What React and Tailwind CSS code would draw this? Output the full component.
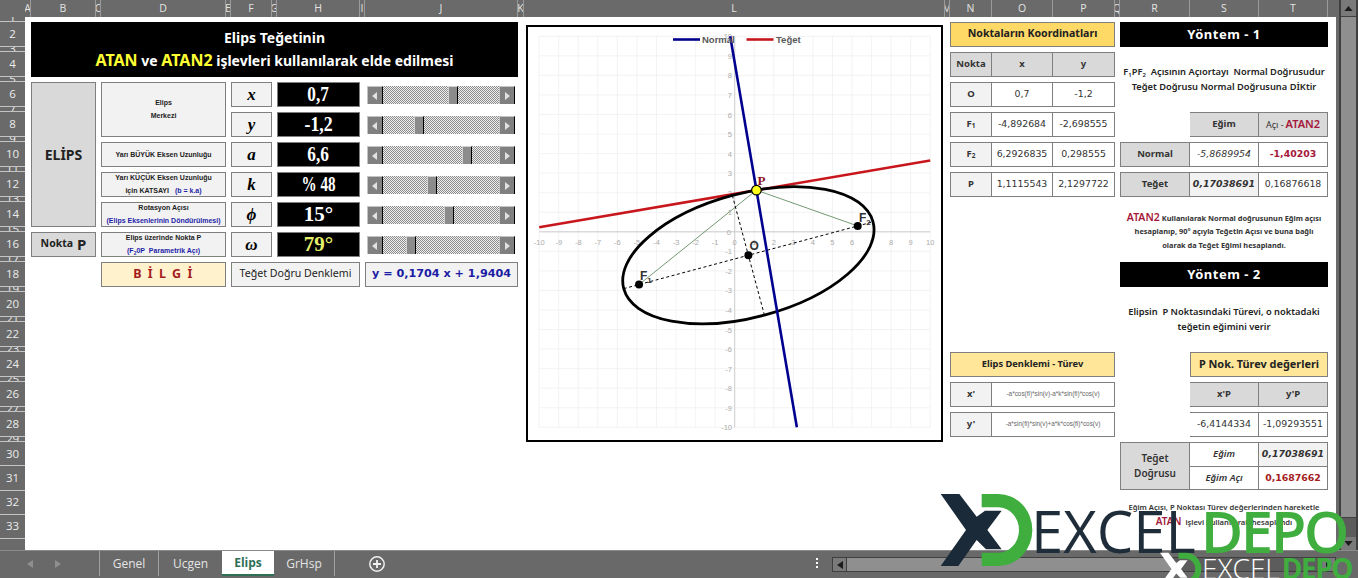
import React from 'react';

// Excel sheet "Elips" with the tangent chart, sliders and result tables

const columns = [
  ['A', 'w-[6px]'], ['B', 'w-[65px]'], ['C', 'w-[5px]'], ['D', 'w-[125px]'], ['E', 'w-[5px]'],
  ['F', 'w-[41px]'], ['G', 'w-[5px]'], ['H', 'w-[83px]'], ['I', 'w-[5px]'], ['J', 'w-[153px]'],
  ['K', 'w-[6px]'], ['L', 'w-[421px]'], ['M', 'w-[5px]'], ['N', 'w-[42px]'], ['O', 'w-[61px]'],
  ['P', 'w-[62px]'], ['Q', 'w-[5px]'], ['R', 'w-[70px]'], ['S', 'w-[69px]'], ['T', 'w-[69px]'],
];

const gutterRows = [
  [1, 'h-[5px]'], [2, 'h-[24.5px]'], [3, 'h-[5.5px]'], [4, 'h-[24.5px]'], [5, 'h-[5.5px]'], [6, 'h-[24.5px]'],
  [7, 'h-[5.5px]'], [8, 'h-[24.5px]'], [9, 'h-[5.5px]'], [10, 'h-[24.5px]'], [11, 'h-[5.5px]'], [12, 'h-[24.5px]'],
  [13, 'h-[5.5px]'], [14, 'h-[24.5px]'], [15, 'h-[5.5px]'], [16, 'h-[24.5px]'], [17, 'h-[5.5px]'], [18, 'h-[24.5px]'],
  [19, 'h-[5.5px]'], [20, 'h-[24.5px]'], [21, 'h-[5.5px]'], [22, 'h-[24.5px]'], [23, 'h-[5.5px]'], [24, 'h-[24.5px]'],
  [25, 'h-[5.5px]'], [26, 'h-[24.5px]'], [27, 'h-[5.5px]'], [28, 'h-[24.5px]'], [29, 'h-[5.5px]'], [30, 'h-[24px]'],
  [31, 'h-[24.5px]'], [32, 'h-[24px]'], [33, 'h-[24px]'],
];

const box = 'flex items-center justify-center border border-[#7f7f7f] text-center';
const label = "whitespace-nowrap font-['Liberation_Sans',sans-serif] font-bold text-[7px] leading-[13px] text-[#222]";
const symbol = "font-['Liberation_Serif',serif] font-bold italic text-[17px] text-black";
const value = "font-['Liberation_Serif',serif] font-bold text-[21px]";
const num = "font-['DejaVu_Sans',sans-serif] text-[9.4px] text-[#333]";
const head = "font-bold text-[9.5px] text-[#333]";

function Arrow({ points }) {
  return (
    <svg viewBox="0 0 8 10" className="h-[10px] w-2">
      <polygon points={points} fill="#e2e2e2" />
    </svg>
  );
}

function Slider({ pos }) {
  return (
    <div className="relative mx-[2px] flex h-[18px] w-[148px] justify-between bg-[repeating-conic-gradient(#8c8c8c_0_25%,#efefef_0_50%)] bg-[length:2px_2px]">
      <div className="flex w-[16px] items-center justify-center border-l border-t border-l-[#c4c4c4] border-t-[#c4c4c4] border-r border-r-black bg-[#808080]">
        <Arrow points="6,1 1,5 6,9" />
      </div>
      <div className="absolute top-0 h-[18px] w-[10px] border-l border-t border-l-[#d0d0d0] border-t-[#d0d0d0] border-r border-r-black bg-[#8c8c8c]" style={{ left: pos }} />
      <div className="flex w-[16px] items-center justify-center border-l border-t border-l-[#c4c4c4] border-t-[#c4c4c4] border-r border-r-black bg-[#808080]">
        <Arrow points="2,1 7,5 2,9" />
      </div>
    </div>
  );
}

function Controls() {
  const sym = (s) => <div className={`${box} bg-[#f2f2f2] ${symbol}`}>{s}</div>;
  const val = (v, c = 'text-white') => <div className={`${box} bg-black ${value} ${c}`}>{v}</div>;
  const squeezed = (v, s) => <span className={`inline-block ${s}`}>{v}</span>;
  const cell = 'flex items-start pt-[4px]';
  return (
    <div className="mt-[5.5px] grid grid-cols-[65px_125px_41px_83px_153px] grid-rows-[repeat(7,24.5px)] gap-x-[5px] gap-y-[5.5px]">
      <div className={`${box} row-span-5 bg-[#d9d9d9] font-bold text-[14px] text-[#222]`}>ELİPS</div>
      <div className={`${box} row-span-2 flex-col bg-[#f2f2f2] ${label}`}>
        <span>Elips</span>
        <span>Merkezi</span>
      </div>
      {sym('x')}{val(squeezed('0,7', 'scale-x-[0.82]'))}<div className={cell}><Slider pos={81} /></div>
      {sym('y')}{val(squeezed('-1,2', 'scale-x-[0.85]'))}<div className={cell}><Slider pos={47} /></div>

      <div className={`${box} bg-[#f2f2f2] ${label}`}>Yarı BÜYÜK Eksen Uzunluğu</div>
      {sym('a')}{val(squeezed('6,6', 'scale-x-[0.82]'))}<div className={cell}><Slider pos={95} /></div>

      <div className={`${box} flex-col bg-[#f2f2f2] ${label}`}>
        <span>Yarı KÜÇÜK Eksen Uzunluğu</span>
        <span>için KATSAYI <span className="ml-1 text-[#1f1fa8]">(b = k.a)</span></span>
      </div>
      {sym('k')}{val(squeezed('% 48', 'scale-x-[0.72]'))}<div className={cell}><Slider pos={60} /></div>

      <div className={`${box} flex-col bg-[#f2f2f2] ${label}`}>
        <span>Rotasyon Açısı</span>
        <span className="text-[#1f1fa8]">(Elips Eksenlerinin Döndürülmesi)</span>
      </div>
      {sym('ϕ')}{val('15°')}<div className={cell}><Slider pos={77} /></div>

      <div className={`${box} bg-[#d9d9d9] font-bold text-[10.5px] text-[#222]`}>
        Nokta<span className="ml-1 text-[15px]">P</span>
      </div>
      <div className={`${box} flex-col bg-[#f2f2f2] ${label}`}>
        <span>Elips üzerinde Nokta P</span>
        <span className="text-[#1f1fa8]">(F<sub className="text-[5px]">2</sub>0P&nbsp; Parametrik Açı)</span>
      </div>
      {sym('ω')}{val('79°', 'text-[#e6f06a]')}<div className={cell}><Slider pos={39} /></div>

      <div />
      <div className={`${box} bg-[#fff2cc] font-bold text-[12.5px] tracking-[1.5px] text-[#a51c1c]`}>B İ L G İ</div>
      <div className={`${box} col-span-2 bg-[#f2f2f2] text-[10.6px] text-[#222]`}>Teğet Doğru Denklemi</div>
      <div className={`${box} bg-[#f2f2f2] font-['DejaVu_Sans',sans-serif] font-bold text-[11.2px] text-[#1c1ca5]`}>y = 0,1704 x + 1,9404</div>
    </div>
  );
}

// page pixel coordinates of the plot, the svg viewBox below uses them directly
const U = 19.55;
const px = (x) => 734.7 + U * x;
const py = (y) => 231.3 - U * y;
const ticks = Array.from({ length: 21 }, (_, i) => i - 10);

const O = [0.7, -1.2];
const F1 = [-4.892684, -2.698555];
const F2 = [6.2926835, 0.298555];
const P = [1.1115543, 2.1297722];

function Chart() {
  const line = (a, b, props) => <line x1={px(a[0])} y1={py(a[1])} x2={px(b[0])} y2={py(b[1])} {...props} />;
  const tickText = { fontSize: 7.5, fill: '#ababab', fontFamily: 'Liberation Sans' };
  const labelText = { fontSize: 12, fontWeight: 700, fill: '#333', fontFamily: 'Liberation Sans' };
  return (
    <div className="ml-[8px] mt-[2.5px] h-[417px] w-[417px] border-2 border-black bg-white">
      <svg viewBox="528 26.5 413 413" className="h-full w-full">
        {ticks.map((t) => (
          <g key={t} stroke="#f0f0f0" strokeWidth="0.8">
            <line x1={px(t)} y1={py(10)} x2={px(t)} y2={py(-10)} />
            <line x1={px(-10)} y1={py(t)} x2={px(10)} y2={py(t)} />
          </g>
        ))}
        {line([0, 10], [0, -10], { stroke: '#c4c4c4', strokeWidth: 0.8 })}
        {line([-10, 0], [10, 0], { stroke: '#c4c4c4', strokeWidth: 0.8 })}
        {ticks.map((t) => (
          <g key={t} {...tickText}>
            <text x={px(t)} y={244} textAnchor="middle">{t}</text>
            {t !== 0 && <text x={732} y={py(t) + 3} textAnchor="end">{t}</text>}
            {t === 0 && <text x={731} y={py(0) + 3} textAnchor="end">0</text>}
          </g>
        ))}
        {line(F1, P, { stroke: '#4f7f4f', strokeWidth: 0.8 })}
        {line(F2, P, { stroke: '#4f7f4f', strokeWidth: 0.8 })}
        {line([-5.675, -2.908], [7.075, 0.508], { stroke: '#000', strokeWidth: 1, strokeDasharray: '3 2.5' })}
        {line([-0.12, 1.86], [1.52, -4.26], { stroke: '#000', strokeWidth: 1, strokeDasharray: '3 2.5' })}
        {line([-10, 0.2364], [10, 3.6444], { stroke: '#c8161d', strokeWidth: 2.6 })}
        <ellipse
          cx={px(O[0])} cy={py(O[1])} rx={6.6 * U} ry={3.168 * U}
          transform={`rotate(-15 ${px(O[0])} ${py(O[1])})`}
          fill="none" stroke="#000" strokeWidth="2.8"
        />
        {line([-0.23, 10], [3.18, -10], { stroke: '#00008f', strokeWidth: 2.6 })}
        {[O, F1, F2].map((p, i) => <circle key={i} cx={px(p[0])} cy={py(p[1])} r="4" fill="#000" />)}
        <circle cx={px(P[0])} cy={py(P[1])} r="4.8" fill="#ffff1a" stroke="#000" strokeWidth="1.2" />
        <text x={757.5} y={184.5} fontSize="13" fontWeight="700" fill="#8c1420" fontFamily="Liberation Serif">P</text>
        <text x={749.5} y={249} {...labelText}>O</text>
        <text x={640} y={279} {...labelText}>F<tspan dy="3" fontSize="8">1</tspan></text>
        <text x={859} y={221} {...labelText}>F<tspan dy="3" fontSize="8">2</tspan></text>
        <line x1="673" y1="39" x2="700" y2="39" stroke="#00008f" strokeWidth="2.6" />
        <text x="702" y="42.5" fontSize="9.5" fontWeight="700" fill="#595959" fontFamily="Liberation Sans">Normal</text>
        <line x1="746.5" y1="39" x2="773.5" y2="39" stroke="#c8161d" strokeWidth="2.6" />
        <text x="776" y="42.5" fontSize="9.5" fontWeight="700" fill="#595959" fontFamily="Liberation Sans">Teğet</text>
      </svg>
    </div>
  );
}

function Points() {
  const rows = [
    ['O', '0,7', '-1,2'],
    [<>F<sub className="text-[6.5px]">1</sub></>, '-4,892684', '-2,698555'],
    [<>F<sub className="text-[6.5px]">2</sub></>, '6,2926835', '0,298555'],
    ['P', '1,1115543', '2,1297722'],
  ];
  const row = 'grid h-[24.5px] grid-cols-[42px_61px_62px] [&>*+*]:border-l-0';
  return (
    <div className="ml-[7px] flex w-[165px] flex-col gap-[5.5px]">
      <div className={`${box} h-[24.5px] bg-[#ffd966] font-bold text-[10.6px] text-[#222]`}>Noktaların Koordinatları</div>
      <div className={row}>
        <div className={`${box} bg-[#d9d9d9] ${head}`}>Nokta</div>
        <div className={`${box} bg-[#d9d9d9] ${head}`}>x</div>
        <div className={`${box} bg-[#d9d9d9] ${head}`}>y</div>
      </div>
      {rows.map((r, i) => (
        <div key={i} className={row}>
          <div className={`${box} bg-[#f2f2f2] ${head}`}>{r[0]}</div>
          <div className={`${box} ${num}`}>{r[1]}</div>
          <div className={`${box} ${num}`}>{r[2]}</div>
        </div>
      ))}
      <div className={`${box} mt-[150px] h-[24.5px] bg-[#ffe699] font-bold text-[9.3px] text-[#222]`}>Elips Denklemi - Türev</div>
      <div className="grid h-[24.5px] grid-cols-[42px_123px] [&>*+*]:border-l-0">
        <div className={`${box} bg-[#f2f2f2] ${head}`}>x'</div>
        <div className={`${box} font-['Liberation_Sans',sans-serif] text-[6.4px] text-[#666]`}>-a*cos(fi)*sin(v)-a*k*sin(fi)*cos(v)</div>
      </div>
      <div className="grid h-[24.5px] grid-cols-[42px_123px] [&>*+*]:border-l-0">
        <div className={`${box} bg-[#f2f2f2] ${head}`}>y'</div>
        <div className={`${box} font-['Liberation_Sans',sans-serif] text-[6.4px] text-[#666]`}>-a*sin(fi)*sin(v)+a*k*cos(fi)*cos(v)</div>
      </div>
    </div>
  );
}

function Methods() {
  const row = 'grid h-[24.5px] grid-cols-[70px_69px_69px] [&>*+*]:border-l-0';
  const band = "flex h-[24.5px] items-center justify-center bg-black font-bold text-[13px] tracking-[0.5px] text-white";
  const para = 'flex h-[54.5px] flex-col items-center justify-center text-[9.3px] font-semibold leading-[15px] text-[#222]';
  return (
    <div className="ml-[5px] flex w-[208px] flex-col gap-[5.5px]">
      <div className={band}>Yöntem - 1</div>
      <div className={para}>
        <span>F<sub className="text-[6px]">1</sub>PF<sub className="text-[6px]">2</sub>&nbsp; Açısının Açıortayı&nbsp; Normal Doğrusudur</span>
        <span>Teğet Doğrusu Normal Doğrusuna DİKtir</span>
      </div>
      <div className={row}>
        <div />
        <div className={`${box} border-l bg-[#d9d9d9] ${head}`}>Eğim</div>
        <div className={`${box} bg-[#d9d9d9] text-[9px] text-[#333]`}>Açı -<span className="ml-[2px] text-[11px] font-semibold text-[#a5173a]">ATAN2</span></div>
      </div>
      <div className={row}>
        <div className={`${box} bg-[#d9d9d9] ${head}`}>Normal</div>
        <div className={`${box} ${num} italic`}>-5,8689954</div>
        <div className={`${box} font-['DejaVu_Sans',sans-serif] text-[9.4px] font-semibold text-[#a5173a]`}>-1,40203</div>
      </div>
      <div className={row}>
        <div className={`${box} bg-[#d9d9d9] ${head}`}>Teğet</div>
        <div className={`${box} bg-[#f2f2f2] ${num} font-semibold italic`}>0,17038691</div>
        <div className={`${box} ${num}`}>0,16876618</div>
      </div>
      <div className="flex h-[54.5px] flex-col items-center justify-center pt-1 font-bold text-[7.4px] leading-[13.5px] text-[#333]">
        <span><span className="mr-[2px] text-[10.5px] font-semibold text-[#a5173a]">ATAN2</span>Kullanılarak Normal doğrusunun Eğim açısı</span>
        <span>hesaplanıp, 90° açıyla Teğetin Açısı ve buna bağlı</span>
        <span>olarak da Teğet Eğimi hesaplandı.</span>
      </div>
      <div className={band}>Yöntem - 2</div>
      <div className={para}>
        <span>Elipsin&nbsp; P Noktasındaki Türevi, o noktadaki</span>
        <span>teğetin eğimini verir</span>
      </div>
      <div className="ml-[70px] flex h-[24.5px]">
        <div className={`${box} w-full bg-[#ffe699] font-bold text-[10.9px] text-[#222]`}>P Nok. Türev değerleri</div>
      </div>
      <div className={row}>
        <div />
        <div className={`${box} border-l bg-[#d9d9d9] ${head}`}>x'P</div>
        <div className={`${box} bg-[#d9d9d9] ${head}`}>y'P</div>
      </div>
      <div className={row}>
        <div />
        <div className={`${box} border-l ${num}`}>-6,4144334</div>
        <div className={`${box} ${num}`}>-1,09293551</div>
      </div>
      <div className="grid h-[48px] grid-cols-[70px_69px_69px] grid-rows-2">
        <div className={`${box} row-span-2 flex-col bg-[#d9d9d9] text-[10px] font-semibold leading-[15px] text-[#333]`}>
          <span>Teğet</span>
          <span>Doğrusu</span>
        </div>
        <div className={`${box} border-l-0 border-b-0 text-[9.5px] font-semibold italic text-[#333]`}>Eğim</div>
        <div className={`${box} border-l-0 border-b-0 bg-[#f2f2f2] ${num} font-semibold italic`}>0,17038691</div>
        <div className={`${box} border-l-0 text-[9.5px] font-semibold italic text-[#333]`}>Eğim Açı</div>
        <div className={`${box} border-l-0 font-['DejaVu_Sans',sans-serif] text-[9.4px] font-semibold text-[#a51c1c]`}>0,1687662</div>
      </div>
      <div className="flex flex-col items-center pt-[4px] text-[7.6px] font-semibold leading-[14px] text-[#333]">
        <span>Eğim Açısı, P Noktası Türev değerlerinden hareketle</span>
        <span><span className="mr-1 text-[10px] text-[#a5173a]">ATAN</span>işlevi kullanılarak hesaplandı</span>
      </div>
    </div>
  );
}

function LogoMark({ xFill, className }) {
  return (
    <svg viewBox="0 0 330 240" className={className}>
      <polygon fill={xFill} points="32,12 88,12 140,80 165,62 215,62 172,120 215,178 168,178 140,150 85,228 32,228 108,120" />
      <path fill="#3fae3f" d="M155 12 H205 A102 108 0 0 1 205 228 H155 V188 H205 A62 68 0 0 0 205 52 H155 Z" />
    </svg>
  );
}

function Watermark() {
  return (
    <>
      <div className="pointer-events-none absolute left-[930px] top-[490px] flex">
        <LogoMark xFill="#1b2a38" className="h-[80px] w-[110px] shrink-0" />
        <div className="-ml-[9px] mt-[2px] flex h-[78px] items-center font-['Open_Sans',sans-serif] text-[58px] leading-none">
          <span className="text-[#1f2d3a]">EXCEL</span>
          <span className="ml-[5px] font-semibold tracking-[-2.5px] text-[#3fae3f]">DEPO</span>
        </div>
      </div>
      <div className="pointer-events-none absolute left-[1155px] top-[551px] flex">
        <LogoMark xFill="#ffffff" className="h-[36px] w-[50px] shrink-0" />
        <div className="-ml-[3px] flex h-[34px] items-center font-['Open_Sans',sans-serif] text-[28px] leading-none">
          <span className="font-light text-white">EXCEL</span>
          <span className="ml-[2px] font-bold tracking-[-1.5px] text-[#3fae3f]">DEPO</span>
        </div>
      </div>
    </>
  );
}

function VerticalScroll() {
  return (
    <div className="flex w-[22px] shrink-0 bg-[#6a6a6a] pl-[3px]">
      <div className="flex w-[19px] flex-col border-x-2 border-[#3f3f3f] bg-[#5c5c5c]">
        <div className="flex h-[16px] shrink-0 items-center justify-center bg-[#7a7a7a]">
          <svg viewBox="0 0 10 6" className="h-[5px] w-[9px]"><polygon points="5,0 10,6 0,6" fill="#1c1c1c" /></svg>
        </div>
        <div className="h-[502px] shrink-0 border-y border-[#3f3f3f] bg-[#8f8f8f]" />
        <div className="flex-1" />
        <div className="flex h-[13px] shrink-0 items-center justify-center bg-[#7a7a7a]">
          <svg viewBox="0 0 10 6" className="h-[5px] w-[9px]"><polygon points="0,0 10,0 5,6" fill="#1c1c1c" /></svg>
        </div>
      </div>
    </div>
  );
}

function TabBar() {
  const tab = 'flex shrink-0 items-center text-[12px] text-[#e4e4e4]';
  return (
    <div className="flex h-[28px] shrink-0 items-start border-t border-[#8a8a8a] bg-[#696969] font-['Open_Sans',sans-serif]">
      <div className="flex h-[25px] w-[100px] shrink-0 items-center gap-[22px] border-r border-[#a0a0a0] pl-[27px]">
        <svg viewBox="0 0 6 8" className="h-2 w-[6px]"><polygon points="6,0 0,4 6,8" fill="#8f8f8f" /></svg>
        <svg viewBox="0 0 6 8" className="h-2 w-[6px]"><polygon points="0,0 6,4 0,8" fill="#8f8f8f" /></svg>
      </div>
      <div className={`${tab} h-[25px] w-[59px] justify-center border-r border-[#a0a0a0]`}>Genel</div>
      <div className={`${tab} h-[25px] w-[63px] justify-center`}>Ucgen</div>
      <div className="flex h-[25px] w-[52px] shrink-0 items-center justify-center border-b-2 border-[#2f6f55] bg-white text-[12px] font-bold text-[#2f6f55]">Elips</div>
      <div className={`${tab} h-[25px] w-[61px] justify-center border-r border-[#a0a0a0]`}>GrHsp</div>
      <div className="flex h-[25px] w-[84px] shrink-0 items-center justify-center">
        <svg viewBox="0 0 16 16" className="h-4 w-4" fill="none" stroke="#f0f0f0" strokeWidth="1.5">
          <circle cx="8" cy="8" r="7.2" />
          <path d="M8 4v8M4 8h8" strokeWidth="1.8" />
        </svg>
      </div>
      <div className="ml-[397px] mt-[7px] flex shrink-0 flex-col gap-[2px]">
        <span className="h-[2px] w-[2px] bg-white" />
        <span className="h-[2px] w-[2px] bg-white" />
        <span className="h-[2px] w-[2px] bg-white" />
      </div>
      <div className="ml-[14px] mt-[6px] flex h-[15px] w-[504px] shrink-0 border border-[#3f3f3f] bg-[#5c5c5c]">
        <div className="flex w-[14px] items-center justify-center border-r border-[#3f3f3f] bg-[#7a7a7a]">
          <svg viewBox="0 0 6 8" className="h-2 w-[6px]"><polygon points="6,0 0,4 6,8" fill="#1c1c1c" /></svg>
        </div>
        <div className="w-[325px] border-r border-[#3f3f3f] bg-[#8f8f8f]" />
        <div className="flex-1" />
        <div className="flex w-[14px] items-center justify-center border-l border-[#3f3f3f] bg-[#7a7a7a]">
          <svg viewBox="0 0 6 8" className="h-2 w-[6px]"><polygon points="0,0 6,4 0,8" fill="#1c1c1c" /></svg>
        </div>
      </div>
    </div>
  );
}

export default function App() {
  return (
    <div className="relative flex h-[578px] w-[1358px] flex-col overflow-hidden bg-[#6a6a6a] font-['Noto_Sans',sans-serif]">
      <div className="flex h-[550px] shrink-0">
        <div className="flex w-[1336px] flex-col">
          <div className="flex h-[17px] shrink-0 pl-[25px]">
            {columns.map(([c, w]) => (
              <div key={c} className={`${w} flex justify-center overflow-hidden border-r border-[#9a9a9a] font-['Open_Sans',sans-serif] text-[10.5px] leading-[17px] text-[#e4e4e4]`}>
                {c}
              </div>
            ))}
          </div>
          <div className="flex h-[533px]">
            <div className="w-[25px] shrink-0 font-['Open_Sans',sans-serif] text-[11.5px] text-[#ececec]">
              {gutterRows.map(([n, h]) => (
                <div key={n} className={`${h} flex items-center justify-center overflow-hidden border-b border-[#c4c4c4]`}>{n}</div>
              ))}
            </div>
            <div className="flex flex-1 items-start bg-white pl-[6px] pt-[5px]">
              <div className="w-[487px] shrink-0">
                <div className="flex h-[54.5px] flex-col items-center justify-center gap-[4px] bg-black font-bold text-white">
                  <span className="text-[14px] leading-[18px]">Elips Teğetinin</span>
                  <span className="text-[14px] leading-[18px]">
                    <span className="text-[16px] text-[#ffff33]">ATAN</span> ve <span className="text-[16px] text-[#ffff33]">ATAN2</span> işlevleri kullanılarak elde edilmesi
                  </span>
                </div>
                <Controls />
              </div>
              <Chart />
              <Points />
              <Methods />
            </div>
          </div>
        </div>
        <VerticalScroll />
      </div>
      <TabBar />
      <Watermark />
    </div>
  );
}
